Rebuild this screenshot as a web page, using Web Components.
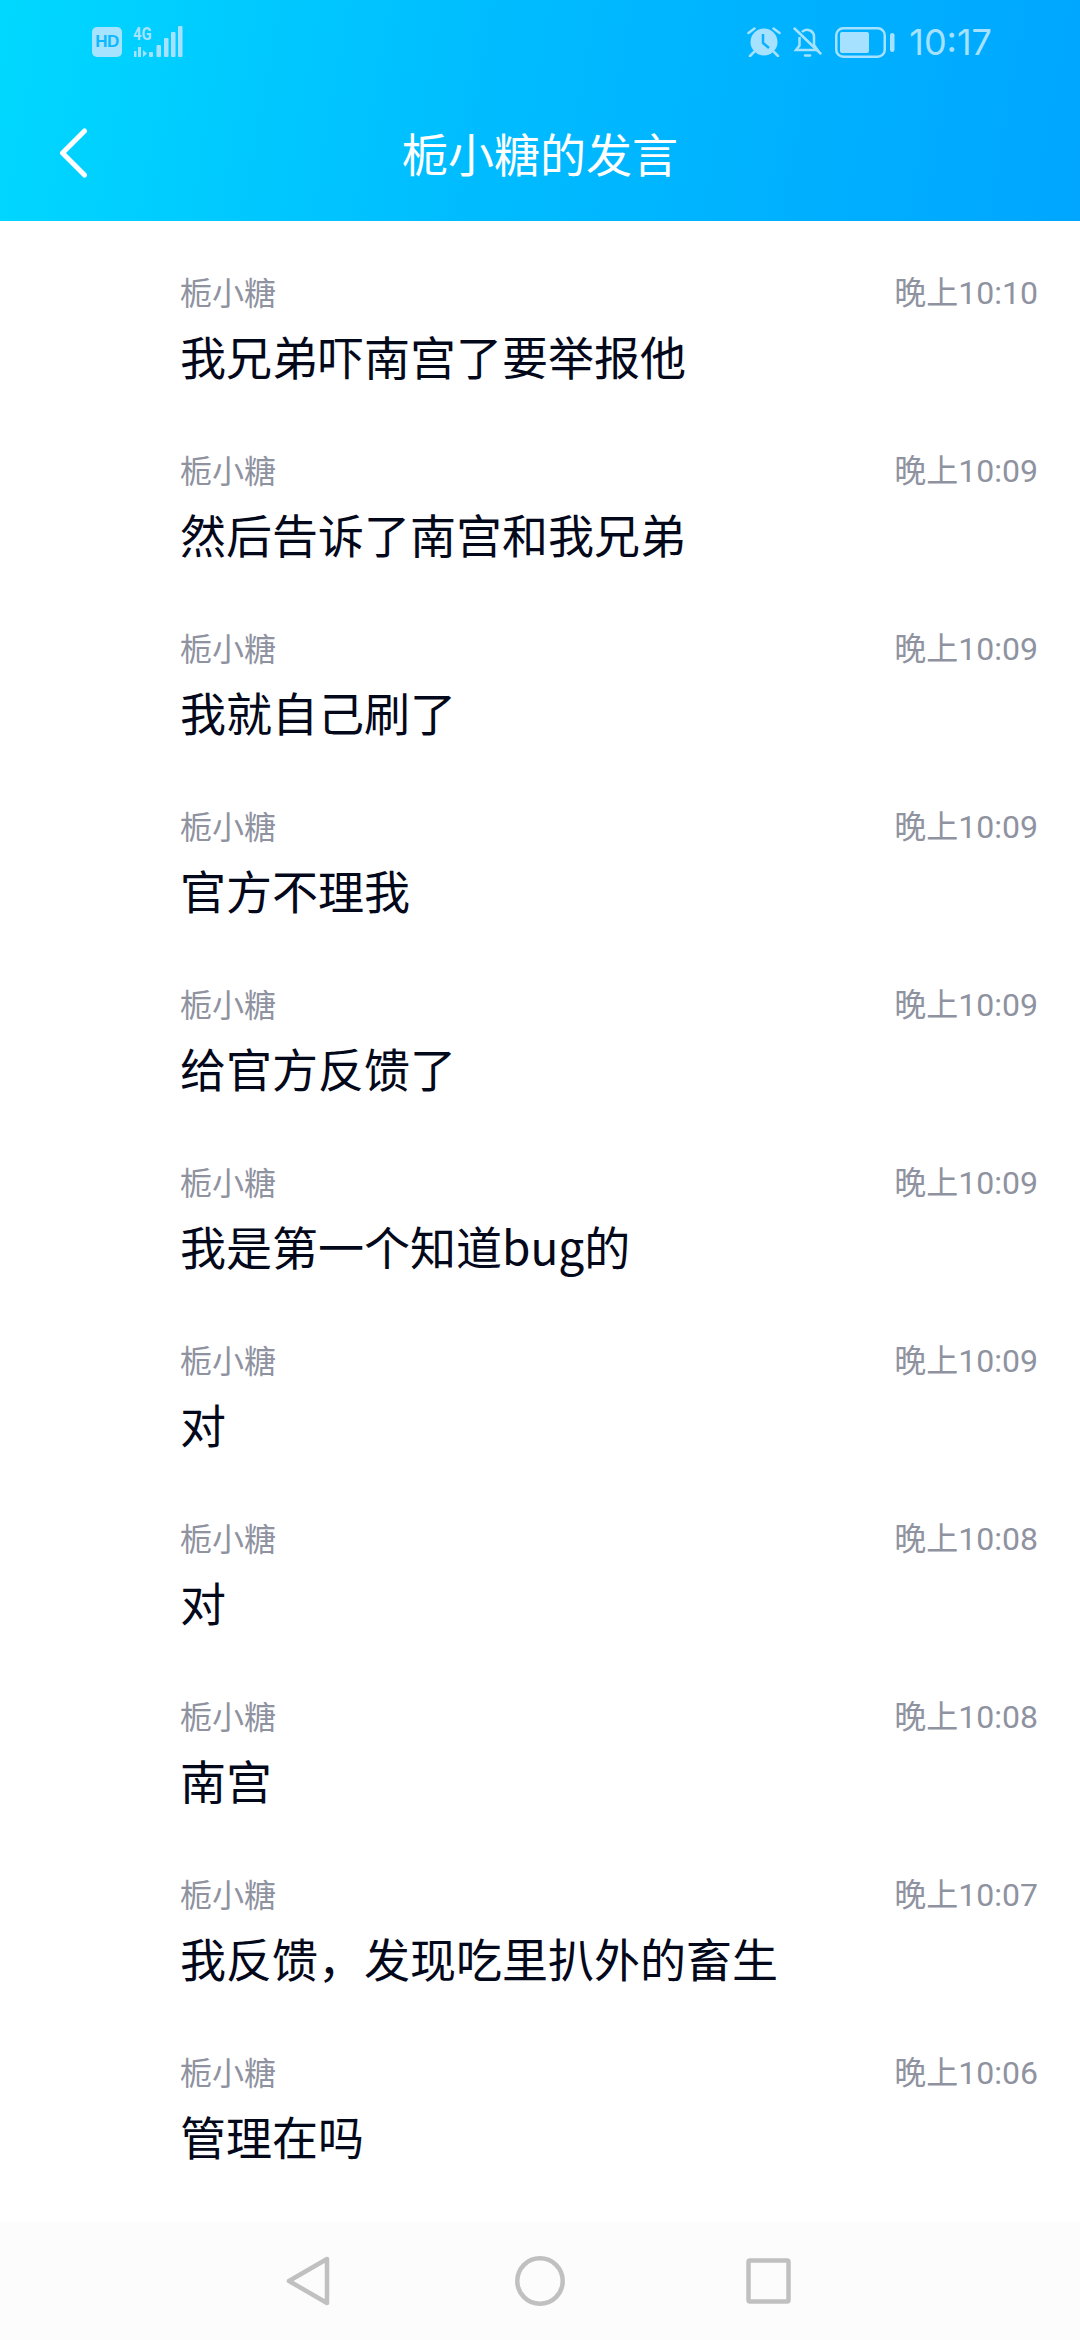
<!DOCTYPE html>
<html lang="zh"><head><meta charset="utf-8"><title>栀小糖的发言</title>
<style>
html,body{margin:0;padding:0;background:#fff}
body{width:1080px;height:2340px;overflow:hidden;font-family:"Noto Sans CJK SC","Noto Sans",sans-serif;display:flex;flex-direction:column}
</style></head><body>
<app-header title="栀小糖的发言"></app-header>
<msg-list>
<msg-item time="晚上10:10">我兄弟吓南宫了要举报他</msg-item>
<msg-item time="晚上10:09">然后告诉了南宫和我兄弟</msg-item>
<msg-item time="晚上10:09">我就自己刷了</msg-item>
<msg-item time="晚上10:09">官方不理我</msg-item>
<msg-item time="晚上10:09">给官方反馈了</msg-item>
<msg-item time="晚上10:09">我是第一个知道bug的</msg-item>
<msg-item time="晚上10:09">对</msg-item>
<msg-item time="晚上10:08">对</msg-item>
<msg-item time="晚上10:08">南宫</msg-item>
<msg-item time="晚上10:07">我反馈，发现吃里扒外的畜生</msg-item>
<msg-item time="晚上10:06">管理在吗</msg-item>
</msg-list>
<nav-bar></nav-bar>
<script>
class AppHeader extends HTMLElement{constructor(){super();const s=this.attachShadow({mode:'open'});
s.innerHTML=`<style>
:host{display:block;height:221px;flex:none;background:linear-gradient(100deg,#00d8ff 0%,#00bcff 45%,#00a6ff 100%);color:#fff}
.status{height:84px;padding:0 88px 0 92px;box-sizing:border-box;display:flex;align-items:center;color:#a6e2ff}
.l{display:flex;align-items:center;gap:11px}
.r{margin-left:auto;display:flex;align-items:center}
.hd{width:30px;height:30px;background:#a5e3ff;border-radius:5px;color:#0cb9ff;font:700 17px/30px "Liberation Sans",sans-serif;text-align:center;letter-spacing:-.5px}
.sig{position:relative;width:50px;height:32px}
.net{position:absolute;left:0;top:0;font:700 19px/16px "Roboto",sans-serif;color:#a6e2ff;transform:scaleX(.78);transform-origin:left top}
.time{font:400 36px/1 "Inter","Roboto",sans-serif;color:#a6e2ff;margin-left:14px}
.bar{height:137px;display:flex;align-items:center;position:relative;justify-content:center}
.title{font-size:46px;line-height:60px;position:relative;top:-1px}
svg{display:block}
.back{position:absolute;left:58px;top:44px}
</style>
<div class="status">
<div class="l"><div class="hd">HD</div>
<div class="sig"><svg width="50" height="32" viewBox="0 0 50 32" fill="#a6e2ff"><path d="M1 25h2.500v6H1zM5 21h3v10H5zM10 24l4 3.500-4 3.500z"/><rect x="16" y="26" width="4" height="5" rx="1"/><rect x="23.500" y="19" width="4.500" height="12" rx="1"/><rect x="31" y="12" width="4.500" height="19" rx="1"/><rect x="38" y="6" width="4.500" height="25" rx="1"/><rect x="45" y="0" width="4.500" height="31" rx="1"/></svg><span class="net">4G</span></div></div>
<div class="r">
<svg width="34" height="30" viewBox="0 0 34 30" style="margin-right:12px"><circle cx="17" cy="15" r="13.500" fill="#a6e2ff"/><path d="M16 7v9l6 5" stroke="#0cb0ff" stroke-width="2.500" fill="none"/><path d="M1.500 6l6-4.500M32.500 6l-6-4.500M7 25l-4 4M27 25l4 4" stroke="#a6e2ff" stroke-width="2.500" stroke-linecap="round"/></svg>
<svg width="29" height="30" viewBox="0 0 29 30" fill="none" stroke="#a6e2ff" stroke-width="2.500" style="margin-right:13px"><path d="M9 5a7 7 0 0 1 12 5.500V18l3.500 5H9"/><path d="M6.500 10v8.500L3 23h6"/><path d="M1.500 1.500l26 25" stroke-linecap="round"/><path d="M12 28.500h5" stroke-width="2.500" stroke-linecap="round"/></svg>
<svg width="60" height="31" viewBox="0 0 60 31"><rect x="1.250" y="1.250" width="48.500" height="28.500" rx="7" fill="none" stroke="#a6e2ff" stroke-width="2.500"/><rect x="5" y="5" width="29" height="21" rx="2" fill="#a6e2ff"/><rect x="55" y="6" width="4.500" height="19" rx="2.200" fill="#a6e2ff"/></svg>
<span class="time">10:17</span></div></div>
<div class="bar"><svg class="back" width="32" height="50" viewBox="0 0 32 50" fill="none" stroke="#fff" stroke-width="5" stroke-linecap="round" stroke-linejoin="round"><path d="M26.500 3 4.500 25 26.500 47"/></svg>
<span class="title"></span></div>`;
s.querySelector('.title').textContent=this.getAttribute('title');}}
customElements.define('app-header',AppHeader);

class MsgList extends HTMLElement{constructor(){super();this.attachShadow({mode:'open'}).innerHTML=`<style>:host{display:block;flex:1;min-height:0;overflow:hidden;padding-top:47px;background:#fff}</style><slot></slot>`;}}
customElements.define('msg-list',MsgList);

class MsgItem extends HTMLElement{constructor(){super();const s=this.attachShadow({mode:'open'});
s.innerHTML=`<style>
:host{display:block;height:178px;padding:0 42px 0 180px;box-sizing:border-box}
.top{display:flex;justify-content:space-between;height:46px;line-height:46px;font-size:32px;color:#8f929f}
.t{font-family:"Roboto","Noto Sans CJK SC",sans-serif;font-size:32px;margin-top:2px}
.b{margin-top:10px;font-size:46px;line-height:62px;color:#03081a;white-space:nowrap}
</style><div class="top"><span>栀小糖</span><span class="t"></span></div><div class="b"><slot></slot></div>`;
s.querySelector('.t').textContent=this.getAttribute('time');}}
customElements.define('msg-item',MsgItem);

class NavBar extends HTMLElement{constructor(){super();this.attachShadow({mode:'open'}).innerHTML=`<style>
:host{display:flex;flex:none;height:118px;background:#fcfcfc;box-sizing:border-box;align-items:flex-start;padding-top:34px;padding-left:286px}
svg{display:block}
</style>
<svg width="44" height="50" viewBox="0 0 44 50" fill="none" stroke="#c0c0c0" stroke-width="4.500" stroke-linejoin="round" style="margin-right:185px"><path d="M41 3v44L3 25z"/></svg>
<svg width="50" height="50" viewBox="0 0 50 50" fill="none" stroke="#c0c0c0" stroke-width="4.500"><circle cx="25" cy="25" r="22.700"/></svg>
<svg width="45" height="46" viewBox="0 0 45 46" fill="none" stroke="#c0c0c0" stroke-width="4.500" stroke-linejoin="round" style="margin-left:181px;margin-top:2px"><rect x="2.500" y="2.500" width="40" height="41" rx="1.500"/></svg>`;}}
customElements.define('nav-bar',NavBar);
</script>
</body></html>
